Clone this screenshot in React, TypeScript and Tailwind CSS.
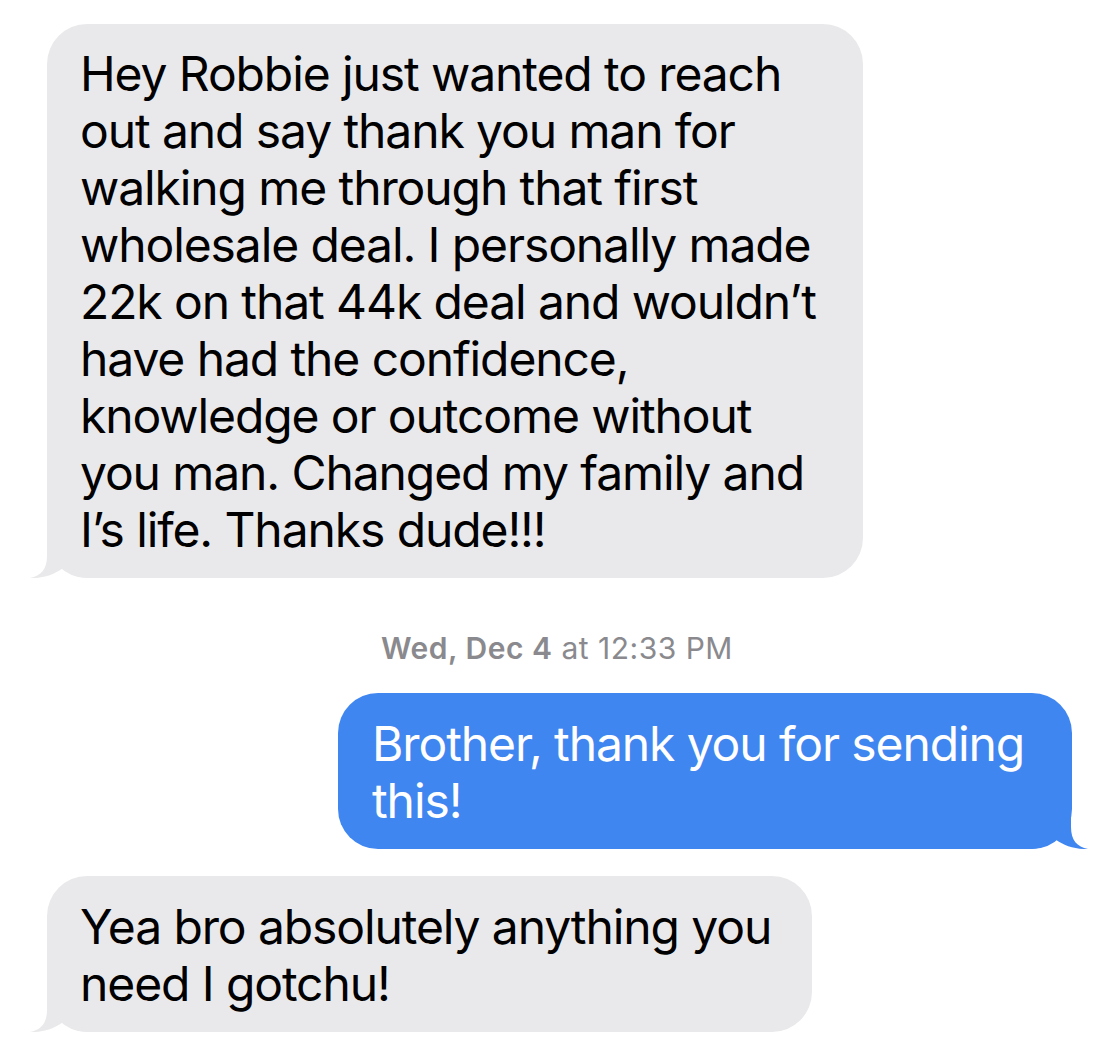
import React from 'react';

const Tail: React.FC<{ color: string; side: 'left' | 'right' }> = ({ color, side }) => (
  <svg
    width="60"
    height="40"
    viewBox="0 0 60 40"
    className={
      side === 'left'
        ? 'absolute bottom-0 left-[-17px]'
        : 'absolute bottom-0 right-[-16px] -scale-x-100'
    }
  >
    <path
      d="M17 0 L17 18 C17 31 11 38 0 40 C12 40.5 24 37 33 30 C40 37 49 40 60 40 L60 0 Z"
      fill={color}
    />
  </svg>
);

const Bubble: React.FC<{ lines: string[]; outgoing?: boolean; className: string }> = ({ lines, outgoing, className }) => {
  const color = outgoing ? '#3f86f1' : '#e9e9eb';
  return (
    <div
      className={`relative rounded-[40px] pt-[22px] pb-[20px] text-[48px] leading-[57px] tracking-[-1.1px] ${
        outgoing ? 'bg-[#3f86f1] text-white pl-[34px]' : 'bg-[#e9e9eb] text-black pl-[33px]'
      } ${className}`}
    >
      <Tail color={color} side={outgoing ? 'right' : 'left'} />
      <div className="relative">
        {lines.map((l, i) => (
          <div key={i} className="whitespace-nowrap">{l}</div>
        ))}
      </div>
    </div>
  );
};

const App: React.FC = () => {
  return (
    <div className="flex h-[1062px] w-[1114px] flex-col gap-[27px] overflow-hidden bg-white px-[42px] pl-[47px] pt-[24px] font-['Inter','Liberation_Sans',sans-serif]">
      <Bubble
        className="w-[816px] !pt-[21px]"
        lines={[
          'Hey Robbie just wanted to reach',
          'out and say thank you man for',
          'walking me through that first',
          'wholesale deal. I personally made',
          '22k on that 44k deal and wouldn’t',
          'have had the confidence,',
          'knowledge or outcome without',
          'you man. Changed my family and',
          'I’s life. Thanks dude!!!',
        ]}
      />

      <div className="mt-[25px] text-center text-[30px] leading-[36px] tracking-[0.5px] text-[#8a8a8e] -ml-[5px]">
        <span className="font-semibold">Wed, Dec 4</span> at 12:33 PM
      </div>

      <Bubble
        outgoing
        className="w-[734px] self-end"
        lines={['Brother, thank you for sending', 'this!']}
      />

      <Bubble className="w-[765px]" lines={['Yea bro absolutely anything you', 'need I gotchu!']} />
    </div>
  );
};

export default App;
